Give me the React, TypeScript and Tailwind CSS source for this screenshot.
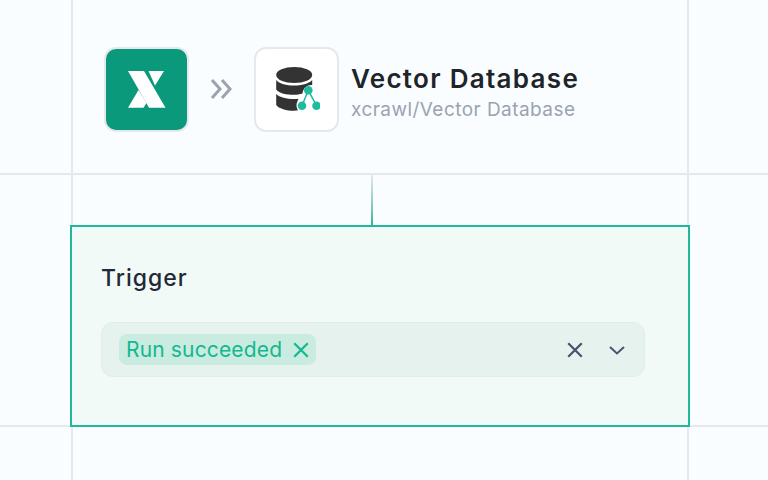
import React from "react";

const XLogo = () => (
  <svg width="38" height="37" viewBox="0 0 38 37" fill="none">
    <path d="M0 0H16L37.500 36.700H21L0 0Z" fill="#fff" />
    <path d="M20.500 0H36L27 14.500L20.500 0Z" fill="#fff" />
    <path d="M0 36.700L10.500 19L18.500 32L15.500 36.700H0Z" fill="#fff" />
  </svg>
);

const DbIcon = () => (
  <svg width="46" height="46" viewBox="0 0 46 46" fill="none">
    <ellipse cx="20.200" cy="8" rx="18" ry="8" fill="#333" />
    <path d="M2.200 13C5.500 17 12.500 18.500 20.200 18.500C27.500 18.500 34.500 17 38.200 13V18C33.500 17.500 29 21 28.500 26.500C25.500 27.500 23 27.800 20.200 27.800C12.500 27.800 5.500 26.500 2.200 22.500V13Z" fill="#333" />
    <path d="M2.200 27C5.500 30.500 12.500 32 20.200 32C21.500 32 23 31.900 24.500 31.700L23 35.500C22 37.500 22.500 41 24 43.300C22.500 43.600 21.500 43.800 20.200 43.800C12.500 43.800 4.500 41.500 2.200 38V27Z" fill="#333" />
    <path d="M34.300 23.300L28 38.700M34.300 23.300L42.500 38.700" stroke="#1ebc9c" strokeWidth="1.500" />
    <circle cx="34.300" cy="23.300" r="4.300" fill="#1ebc9c" />
    <circle cx="28" cy="38.700" r="4.300" fill="#1ebc9c" />
    <circle cx="42.500" cy="38.700" r="4.300" fill="#1ebc9c" />
  </svg>
);

const Cross = ({ size, color, width }: { size: number; color: string; width: number }) => (
  <svg width={size} height={size} viewBox="0 0 16 16" fill="none">
    <path d="M2 2L14 14M14 2L2 14" stroke={color} strokeWidth={width} />
  </svg>
);

export default function App() {
  return (
    <div className="flex h-[480px] w-[768px] flex-col overflow-hidden bg-[#f9fdff] font-['Inter',sans-serif]">
      {/* Header row */}
      <div className="h-[175px] shrink-0 border-b-2 border-[#e5e9ee] pl-[71px]">
        <div className="flex h-full w-[618px] items-start border-x-2 border-[#e5e9ee] pl-[31px] pt-[47px]">
          <div className="flex h-[85px] w-[85px] items-center justify-center rounded-[12px] border-2 border-[#e5e9ee] bg-[#0a9a7b]">
            <XLogo />
          </div>
          <svg className="ml-[20px] mr-[19px] mt-[30px]" width="26" height="24" viewBox="0 0 26 24" fill="none">
            <path d="M3 3L11 12L3 21M13 3L21 12L13 21" stroke="#9ca3af" strokeWidth="3" />
          </svg>
          <div className="flex h-[85px] w-[85px] items-center justify-center rounded-[12px] border-2 border-[#e5e9ee] bg-white">
            <DbIcon />
          </div>
          <div className="ml-[12px] mt-[15px]">
            <div className="text-[26px] leading-[34px] font-semibold tracking-[1.3px] text-[#1f2429]">Vector Database</div>
            <div className="mt-[1px] text-[19px] leading-[26px] tracking-[0.45px] text-[#9ca3af]">xcrawl/Vector Database</div>
          </div>
        </div>
      </div>

      {/* Connector */}
      <div className="ml-[71px] h-[50px] w-[618px] shrink-0 border-x-2 border-[#e5e9ee] pl-[298px]">
        <div className="h-full w-[2px] bg-gradient-to-b from-[#e5e9ee] to-[#1fb898]" />
      </div>

      {/* Card row, the grid line meets the card on both sides */}
      <div className="flex h-[202px] shrink-0">
        <div className="w-[70px] shrink-0 border-b-2 border-[#e5e9ee]" />
        <div className="w-[620px] shrink-0 border-2 border-[#1fb898] bg-[#f2faf7] pl-[29px] pr-[43px] pt-[35px]">
          <div className="text-[23px] leading-[32px] font-[550] tracking-[1px] text-[#1f2937]">Trigger</div>
          <div className="mt-[28px] flex h-[55px] items-center rounded-[12px] border border-[#e3ece9] bg-[#e6f2ee] pl-[17px] pr-[17px]">
            <div className="flex h-[31px] items-center gap-[10px] rounded-[8px] bg-[#c9ebe0] pl-[7px] pr-[6px]">
              <span className="text-[21px] tracking-[0.15px] text-[#14b88f]">Run succeeded</span>
              <Cross size={18} color="#14b88f" width={2} />
            </div>
            <div className="ml-auto flex items-center gap-[23px]">
              <Cross size={18} color="#4b5270" width={2} />
              <svg width="20" height="20" viewBox="0 0 20 20" fill="none">
                <path d="M3 7L10 13.500L17 7" stroke="#4b5270" strokeWidth="2" />
              </svg>
            </div>
          </div>
        </div>
        <div className="flex-1 border-b-2 border-[#e5e9ee]" />
      </div>

      {/* Bottom row */}
      <div className="ml-[71px] w-[618px] flex-1 border-x-2 border-[#e5e9ee]" />
    </div>
  );
}
